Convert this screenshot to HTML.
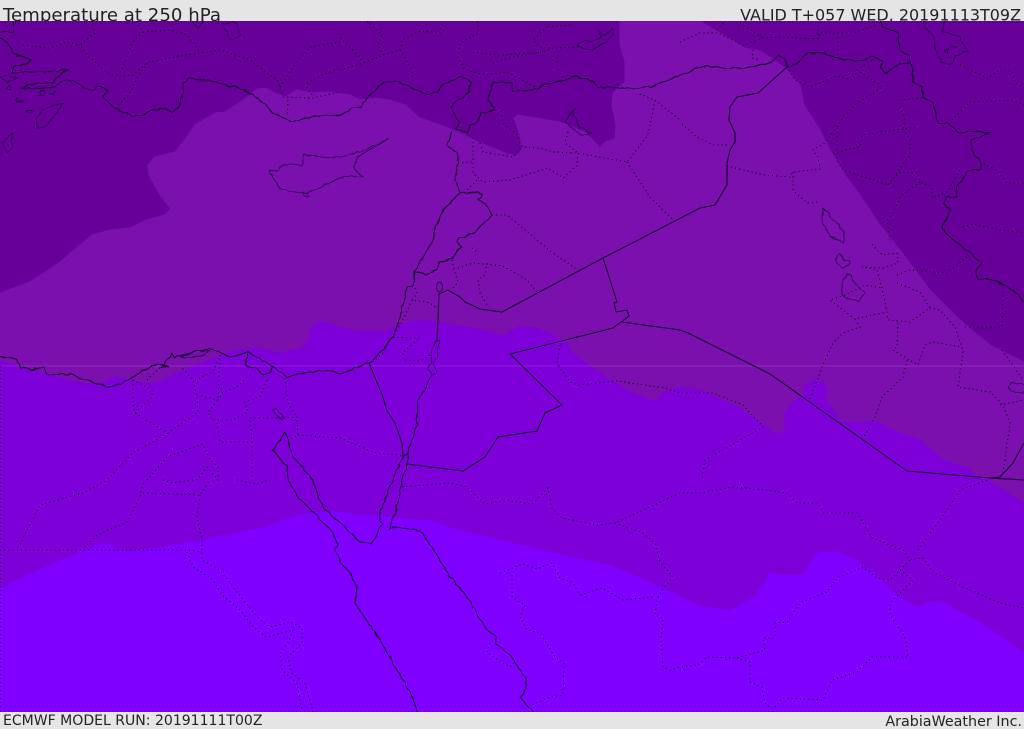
<!DOCTYPE html>
<html><head><meta charset="utf-8"><title>Temperature at 250 hPa</title>
<style>
html,body{margin:0;padding:0;background:#e5e5e5;width:1024px;height:729px;overflow:hidden}
svg{display:block}
text{font-family:"DejaVu Sans","Liberation Sans",sans-serif;fill:#222}
.c{fill:none;stroke:#12002a;stroke-width:1.05;stroke-linejoin:round}
.t{fill:none;stroke:#1c0040;stroke-width:.75;stroke-linejoin:round}
.d{fill:none;stroke:#0c0020;stroke-width:1.1;stroke-dasharray:1.1 3.1}
</style></head><body>
<svg width="1024" height="729" viewBox="0 0 1024 729" xmlns="http://www.w3.org/2000/svg">
<defs>
<filter id="w" filterUnits="userSpaceOnUse" x="0" y="0" width="1024" height="729"><feTurbulence type="fractalNoise" baseFrequency="0.13" numOctaves="2" seed="4"/><feDisplacementMap in="SourceGraphic" scale="4" xChannelSelector="R" yChannelSelector="G"/></filter>
</defs>
<rect width="1024" height="729" fill="#e5e5e5"/>
<text x="3" y="21" font-size="18.17">Temperature at 250 hPa</text>
<text x="1021" y="20.7" font-size="15.96" text-anchor="end">VALID T+057 WED, 20191113T09Z</text>
<text x="3" y="725" font-size="14.04">ECMWF MODEL RUN: 20191111T00Z</text>
<text x="1022" y="726" font-size="14.3" text-anchor="end">ArabiaWeather Inc.</text>
<svg x="0" y="21" width="1024" height="691" viewBox="0 21 1024 691">
<rect x="0" y="21" width="1024" height="691" fill="#660099"/>
<path fill="#7b10ae" stroke="#7b10ae" stroke-linejoin="round" d="M0 293L30 282 60 262 80 245 92 235 110 230 130 228 147 220 165 215 171 209 160 195 149 175 148 165 155 157 175 152 185 140 195 125 215 113 225 112 243 100 250 95 257 89 265 88 275 93 285 97 297 90 310 93 330 92 350 95 360 100 375 98 390 100 405 105 420 118 440 125 460 133 480 143 505 153 516 156 522 150 520 135 514 118 518 115 530 117 560 122 585 132 600 148 605 142 615 139 616 125 612 105 613 93 625 82 625 62 620 45 620 21 700 21 715 30 745 48 760 51 772 58 785 68 800 85 804 105 820 130 830 150 845 175 860 195 880 225 900 250 930 290 960 320 990 345 1024 362V712H0Z"/>
<path fill="#7e00d8" stroke="#7e00d8" stroke-linejoin="round" d="M0 361L20 367 50 375 80 383 97 385 103 382 117 377 143 383 157 383 180 372 207 361 233 351 257 348 280 353 302 348 308 340 313 325 320 321 340 327 357 331 387 331 407 322 423 320 453 325 473 328 503 336 512 331 520 326 537 328 553 335 567 343 573 353 590 367 627 390 650 400 657 401 663 393 680 387 700 390 723 400 740 408 760 422 773 432 782 434 785 430 785 413 792 403 804 395 805 385 813 381 823 382 827 390 825 400 835 412 840 422 857 423 875 421 897 432 920 440 943 460 967 468 977 477 987 480 1024 503V712H0Z"/>
<path fill="#7f00ff" stroke="#7f00ff" stroke-linejoin="round" d="M0 589L33 573 83 551 103 544 112 544 114 549 130 552 150 549 200 541 267 527 293 517 313 513 340 512 357 516 373 515 393 518 430 521 457 530 490 538 540 550 573 558 607 565 640 578 680 597 697 606 730 611 737 608 743 603 755 598 760 588 767 580 768 573 780 575 803 575 808 568 817 554 823 552 840 553 857 562 880 580 900 598 917 607 930 602 943 603 980 623 1024 653V712H0Z"/>
<rect x="0" y="365.5" width="1024" height="1" fill="#fff" opacity=".13"/>
<path class="d" style="stroke-dasharray:1 3;opacity:.3" d="M0 21.5H1024M0 711.5H1024"/>
<path class="d" style="stroke-dasharray:1 3;opacity:.6" d="M.5 366V712"/>

<!-- dotted admin boundaries -->
<g shape-rendering="crispEdges">
<path class="d" d="M92 21L95 33 80 45 90 58 107 72 115 77 133 75 147 63 173 57 200 53 220 50 250 60 277 80 283 95M23 45L50 48 67 42 80 45M137 21L143 32 170 30 187 35 200 52M143 32L132 43 122 70 115 77M147 63L137 78 132 90 117 107M280 87L293 67 310 47 340 42M307 83L320 76 340 68M283 97L313 98 340 92M288 100L287 117M307 87L312 95M15 23L25 21"/>
<path class="d" d="M340 70L363 63 383 55 400 50 402 40 420 31 440 33 442 21M367 21L382 35 378 45 383 55M340 38L353 50 363 62M400 50L412 70 413 83M478 21L478 33 460 43 458 57 465 70 487 75 507 72 537 88M473 52L500 55 543 52 553 48 580 47M557 57L557 68 565 80M547 27L533 40 540 47 553 48M570 25L547 27M493 63L513 57 543 52"/>
<path class="d" d="M500 107L503 123 517 135 522 147 540 148 553 152 577 153 627 162 648 135 655 100 637 93M655 100L680 120M627 162L637 177 650 197 673 220M578 153L577 165 563 178 548 168 510 180 483 182 473 173 473 137M480 143L483 152 513 157 522 147M458 163L473 162M477 180L467 190M492 215L507 215 537 240 553 253 578 270M568 132L565 143 578 153"/>
<path class="d" d="M452 260L455 273 458 282 453 288M458 268L473 263 503 266 527 280 537 292M487 263L485 275 478 280 480 293 487 305M472 248L477 252M415 288L417 293 412 300 427 302 438 308M412 300L403 320 393 337 410 338 420 338 403 352 403 360 420 361 430 355M383 353L373 362M560 345L557 363 570 382 577 385 617 381 665 388 680 393 713 393 743 405 763 427 705 460 702 480M298 435L340 438 373 452 403 456"/>
<path class="d" d="M402 487L450 483 467 487 485 504 507 500 532 504 548 488 552 508 562 518 597 525 615 523 680 493 700 493 733 487 767 490 787 493 797 503 818 503 823 513 857 513 872 538 903 550 910 560 923 558 933 572 963 587 1000 603 1024 608M615 523L643 533 655 543 660 562 673 577 662 590 657 600 655 615 663 618 661 640 663 667 670 670 680 667 698 665 707 657 737 658 765 650 763 638 775 638 775 623 787 622 800 603 827 592 837 578 863 567 877 578 890 580 900 570 910 560M500 573L523 564 537 569 552 563 560 578 573 583 580 595 602 588 623 600 655 597M512 575L512 597 525 605 520 617 527 630 540 633 555 657 564 663 563 695 547 698 532 705M490 643L487 653 510 667 515 662M900 570L913 580 890 603 890 615 905 637 908 657 872 657 857 672 832 680 823 700 782 698 773 710M737 658L750 662 750 682 762 687 765 703 773 710M918 550L947 510 960 490 988 480"/>
<path class="d" d="M810 399L823 365 833 343 843 333 860 327 855 319 887 312 882 288 877 270 862 267 883 268 898 263 897 253 883 255 877 250 870 242M855 319L830 300 845 295 865 285 882 288M887 312L888 320 910 322 930 308 940 310 955 327 962 347 963 353 958 387 990 392 1003 405 1010 423 1003 473M898 323L897 347 893 350 918 365 925 345 933 342 962 347M907 360L903 377 882 397 875 417 862 440M897 275L910 270 947 273 967 257M897 283L920 292 930 308M965 327L1002 327 1003 290M1002 350L1023 380M1000 405L1024 400"/>
<path class="d" d="M837 127L843 117 857 103 883 87 877 83 857 70 853 80 837 76 810 87 795 80 787 67M857 70L873 60M753 50L752 58 760 60M680 42L700 33 718 33 743 45 763 38 783 37 818 39 820 33 853 33 877 25M818 39L818 23M838 37L838 55M717 30L723 23M740 23L763 38M682 124L697 137 713 145 730 145M727 166L763 175 790 177 793 172 820 169 818 157 813 150 825 143 837 127M793 172L793 190 807 203 817 202M833 153L860 147 862 135 903 129 918 127M903 129L910 140 910 155 888 185 843 170 837 160 837 127M888 185L900 172 918 173 920 182 932 187 932 198 947 192 960 170M920 182L900 197 893 213 887 220 890 240M900 100L922 98M900 107L905 120 903 129M952 120L970 102 1013 100 1024 105M980 162L997 170 1007 183 1024 183M960 65L987 78 1003 68 1013 73 1015 83 1024 88M963 227L973 224 1000 230 1024 233"/>
<path class="d" d="M133 380L133 403 135 413 168 433 198 412 197 397 193 380 182 368M133 380L152 390 152 397 135 413M147 380L163 365M168 433L133 453 107 480 83 493 40 505 18 548M195 380L213 372 220 355 218 400 208 412 212 420 233 420 248 412 245 402 260 397 267 380M197 395L218 400 223 392 237 387 252 373M217 423L220 442 252 442 250 418 283 418 297 417 298 435 290 440M285 378L288 403 297 417M252 442L252 480M147 480L167 457 203 444 210 460 218 467 218 480 207 467 197 480M163 480L173 483 193 480M237 480L257 484 270 480M87 545L97 535 127 522 140 497 143 483M143 493L200 495 210 480M200 495L197 517 202 540 202 560 220 570 233 587 257 617 270 627 290 622 302 628 302 643 288 657 292 673 305 683 313 712M0 550L187 550 202 552M187 552L193 567 213 580 222 595 240 610 253 627 267 637 293 630 288 643 280 653 282 670 297 683 302 710"/>
</g>

<!-- solid coast (wiggled) and straight borders -->
<g filter="url(#w)">
<path class="c" d="M0 38L8 42 12 53 20 55 25 58 32 60 23 65 13 67 13 73 22 72 43 72 68 70 57 77 53 83 37 83 20 88 33 89 55 87 63 80 73 80 83 87 93 90 98 86 108 91 103 95 108 103 120 112 133 116 140 116 160 108 173 112 180 105 183 93 183 83 188 78 213 81 233 87 253 94 267 107 277 115 293 122 307 117 340 115 352 108 362 107 363 102 383 83 397 81 427 95 438 92 442 85 462 76 471 83 469 92 450 107 459 122 455 128"/>
<path class="c" d="M13 21L13 32 0 33"/>
<path class="c" d="M455 128L468 133 470 125 478 122 480 113 495 110 488 100 493 81 512 84 513 91 533 90 543 85 563 80 575 76 593 82 598 87 623 89 650 87 680 75 703 66 727 68 743 68 770 63 778 56 786 60 787 67 797 64 807 53 823 53 843 60 860 61 873 56 883 61 880 68 886 73 900 63 910 63 913 70 913 82 922 87 923 98 933 103 938 123 947 123 960 133 977 131 990 133 972 140 972 150 980 163 980 169 967 172 957 187 957 197 947 197 943 203 950 210 942 228 953 240 967 250 982 263 975 272 978 279 990 279 1013 290 1024 302M880 21L883 27 898 33 900 50 910 57 910 63"/>
<path class="c" d="M452 132L447 145 457 153 458 163 455 180 460 193 453 200 443 210 435 230 433 240 420 263 415 272 413 285 407 287 400 318 392 338 380 353 369 363 340 373M460 193L477 192 483 195 478 199 488 207 492 215 475 232 460 238 458 240 457 243 462 247 458 250 453 259 438 263 437 270 427 274 415 272"/>
<path class="c" d="M408 453L417 423 418 402 432 375M403 457L393 480 380 513 382 523 372 543 360 542 340 523 328 512 320 503 313 480 293 457 285 432 273 450 287 467 288 480 300 500 315 513 325 525 333 532 338 545 335 550 340 562 348 570 357 587 355 602 373 630 390 657 412 697 418 712M408 453L407 467 402 480 398 503 393 518 388 530 392 527 420 530 437 555 450 577 467 597 487 630 497 637 495 643 510 655 525 677 526 690 520 697 533 712"/>
<path class="c" d="M0 357L17 359 20 367 33 370 43 367 47 374 72 375 97 383 107 388 123 383 157 363 168 366 161 367 172 353 175 357 210 348 230 357 248 352 272 366 287 377 307 372 330 371 340 373M248 353L245 365 257 368 262 375 270 373 272 366"/>
<path class="t" d="M180 357L195 352 210 350 205 354 188 358ZM437 340L435 341 431 353 432 363 428 368 432 375 437 372 433 365 438 353 439 340ZM270 170L277 172 283 165 302 165 304 154 320 157 340 157 360 152 389 139 357 157 353 167 363 177 347 176 340 178 307 193 293 192 280 188 272 177Z"/>
<path class="t" d="M307 193L303 192 305 196 309 196Z"/>
<path class="t" d="M272 410L277 408 285 418 282 420Z"/>
<path class="t" d="M63 102L43 110 36 120 38 128 45 127 55 115ZM12 132L3 143 8 153 12 148ZM0 77L7 83 17 78 8 75ZM6 88L10 85 11 89ZM15 100L20 103 23 102 17 98ZM26 111H32V113H26ZM40 91L45 90 44 96 40 95ZM50 93L55 92 54 95ZM192 21L198 28 203 21ZM222 23L230 40 241 36 235 23Z"/>
<path class="t" d="M577 45L585 40 590 42 602 37 598 30 605 36 612 28 614 35 605 42 592 50 582 48ZM564 122L575 108 573 115 580 127 592 133 580 135 572 127ZM925 21L925 28 933 35 937 55 942 62 948 65 953 63 955 55 968 52 960 37 943 32 945 21M945 50L949 49 948 54ZM952 46L956 47 953 48Z"/>
<path class="t" d="M823 208L822 223 830 237 843 242 845 232 827 212ZM835 260L840 254 843 259 849 262 848 265 843 268ZM847 275L842 283 842 295 858 302 865 292 855 283 850 275ZM1013 383L1008 387 1012 392 1024 393V384Z"/>
</g>
<path class="c" d="M787 67L758 93 737 97 730 107 729 120 735 133 735 142 730 150 727 163 727 185 715 205 700 208 638 240 603 258 502 312 480 309 465 302 460 297 448 290 439 294 438 320 437 340M603 258L617 302 614 303 616 312 627 310 629 316 613 328 510 354 562 405 545 413 537 431 498 437 485 457 463 471 407 464M622 322L680 330 688 333 770 374 907 471 990 478 1000 477 1013 463 1024 443M990 478L1024 480"/>
<path class="c" d="M369 363L383 397 387 411 395 423 402 443 403 457 408 453"/>
<ellipse class="t" cx="439.5" cy="287" rx="3" ry="5"/>
</svg>
</svg>
</body></html>
